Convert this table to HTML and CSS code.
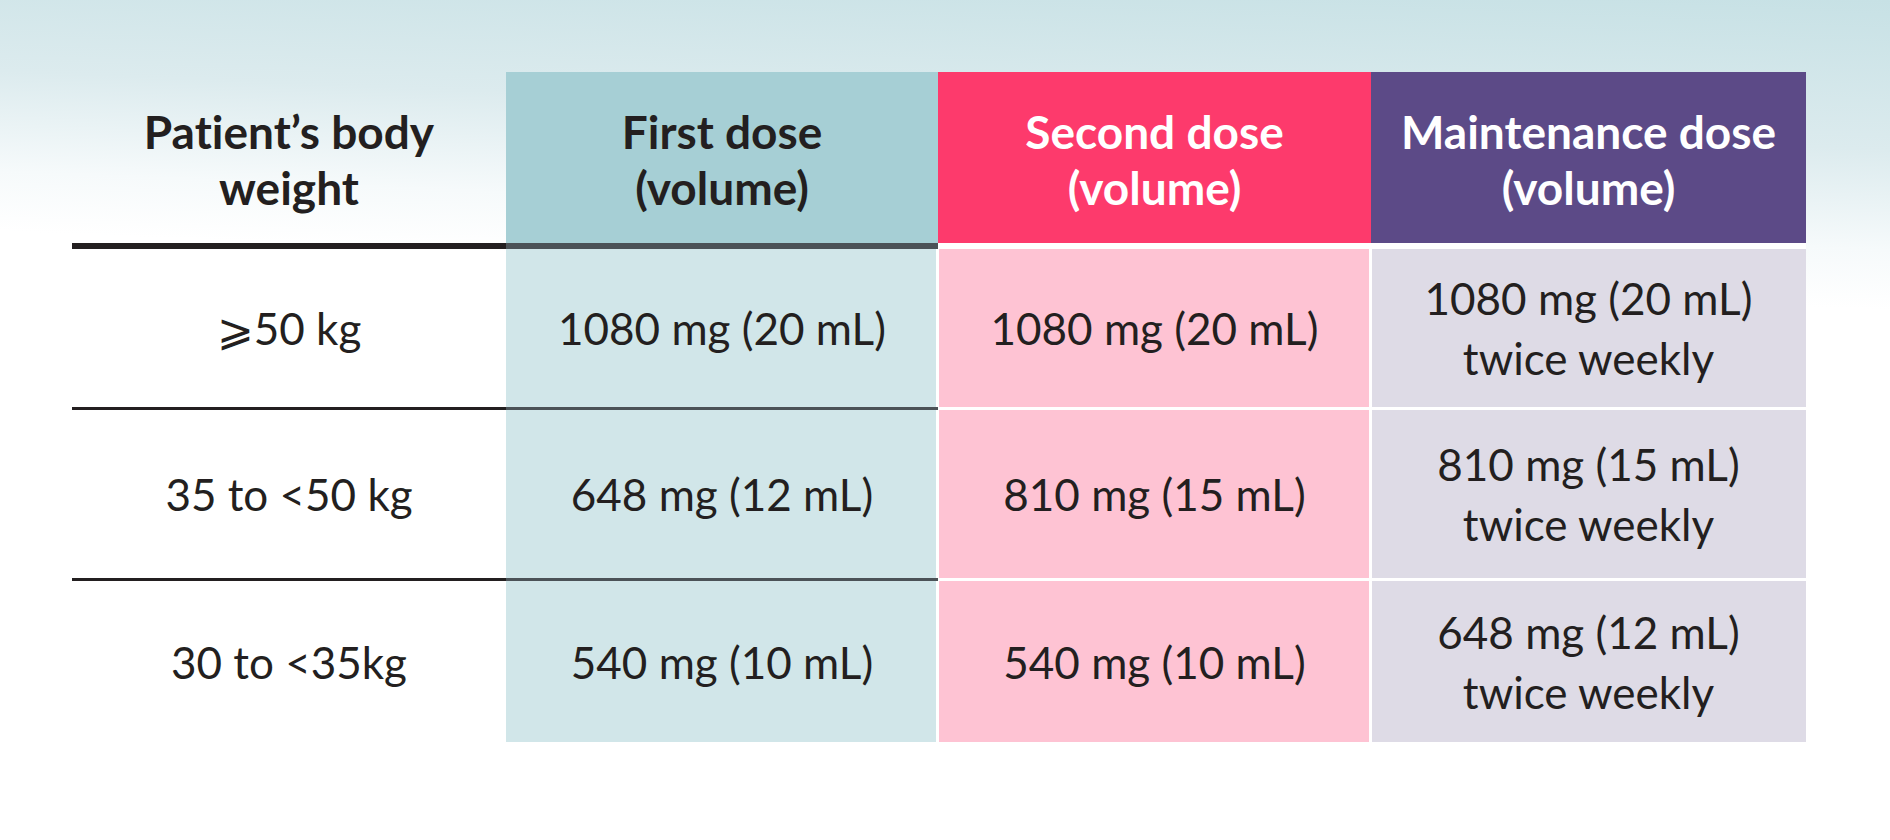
FILE: index.html
```html
<!DOCTYPE html>
<html lang="en">
<head>
<meta charset="utf-8">
<title>Dosing by body weight</title>
<link rel="stylesheet" href="styles.css">
</head>
<body>
<main class="page">
  <div class="dose-table">
    <div class="cell head head-weight">Patient’s body<br>weight</div>
    <div class="cell head head-first">First dose<br>(volume)</div>
    <div class="cell head head-second">Second dose<br>(volume)</div>
    <div class="cell head head-maint">Maintenance dose<br>(volume)</div>

    <div class="cell body weight">⩾50 kg</div>
    <div class="cell body first">1080 mg (20 mL)</div>
    <div class="cell body second">1080 mg (20 mL)</div>
    <div class="cell body maint">1080 mg (20 mL)<br>twice weekly</div>

    <div class="cell body weight">35 to &lt;50 kg</div>
    <div class="cell body first">648 mg (12 mL)</div>
    <div class="cell body second">810 mg (15 mL)</div>
    <div class="cell body maint">810 mg (15 mL)<br>twice weekly</div>

    <div class="cell body weight last">30 to &lt;35kg</div>
    <div class="cell body first last">540 mg (10 mL)</div>
    <div class="cell body second last">540 mg (10 mL)</div>
    <div class="cell body maint last">648 mg (12 mL)<br>twice weekly</div>
  </div>
</main>
</body>
</html>
```
FILE: styles.css
```css
html, body {
  margin: 0;
  padding: 0;
}

body {
  width: 1890px;
  height: 840px;
  overflow: hidden;
  background: linear-gradient(182.4deg, #c7e1e5 0px, #dcebee 150px, #f6fafb 250px, #ffffff 310px, #ffffff 100%);
  font-family: Lato, "Liberation Sans", sans-serif;
  font-variant-ligatures: none;
  font-feature-settings: "liga" 0, "clig" 0;
  color: #231f20;
}

.page {
  padding: 72px 0 0 72px;
}

.dose-table {
  display: grid;
  grid-template-columns: 434px 432px 433px 435px;
  grid-template-rows: 177px 161px 171px 161px;
}

.cell {
  box-sizing: border-box;
  display: flex;
  align-items: center;
  justify-content: center;
  text-align: center;
}

.head {
  font-weight: 700;
  font-size: 46px;
  line-height: 56px;
  border-bottom: 6px solid #231f20;
  padding-top: 4px;
}

.body {
  font-weight: 400;
  font-size: 44px;
  line-height: 60px;
  border-bottom: 3px solid #231f20;
}

.head-first {
  background: #a6cfd5;
  border-bottom-color: #4b5257;
}

.head-second {
  background: #fd3a6c;
  color: #ffffff;
  border-bottom-color: #ffffff;
}

.head-maint {
  background: #5c4a87;
  color: #ffffff;
  border-bottom-color: #ffffff;
}

.weight {
  background: transparent;
}

.first {
  background: #d1e6e9;
  border-bottom-color: #4b5257;
  box-shadow: inset -2px 0 0 #ffffff;
}

.second {
  background: #fec3d3;
  border-bottom-color: #ffffff;
  box-shadow: inset 1px 0 0 #ffffff, inset -2px 0 0 #ffffff;
}

.maint {
  background: #dedbe6;
  border-bottom-color: #ffffff;
  box-shadow: inset 1px 0 0 #ffffff;
}

.last {
  border-bottom: none;
}
```
